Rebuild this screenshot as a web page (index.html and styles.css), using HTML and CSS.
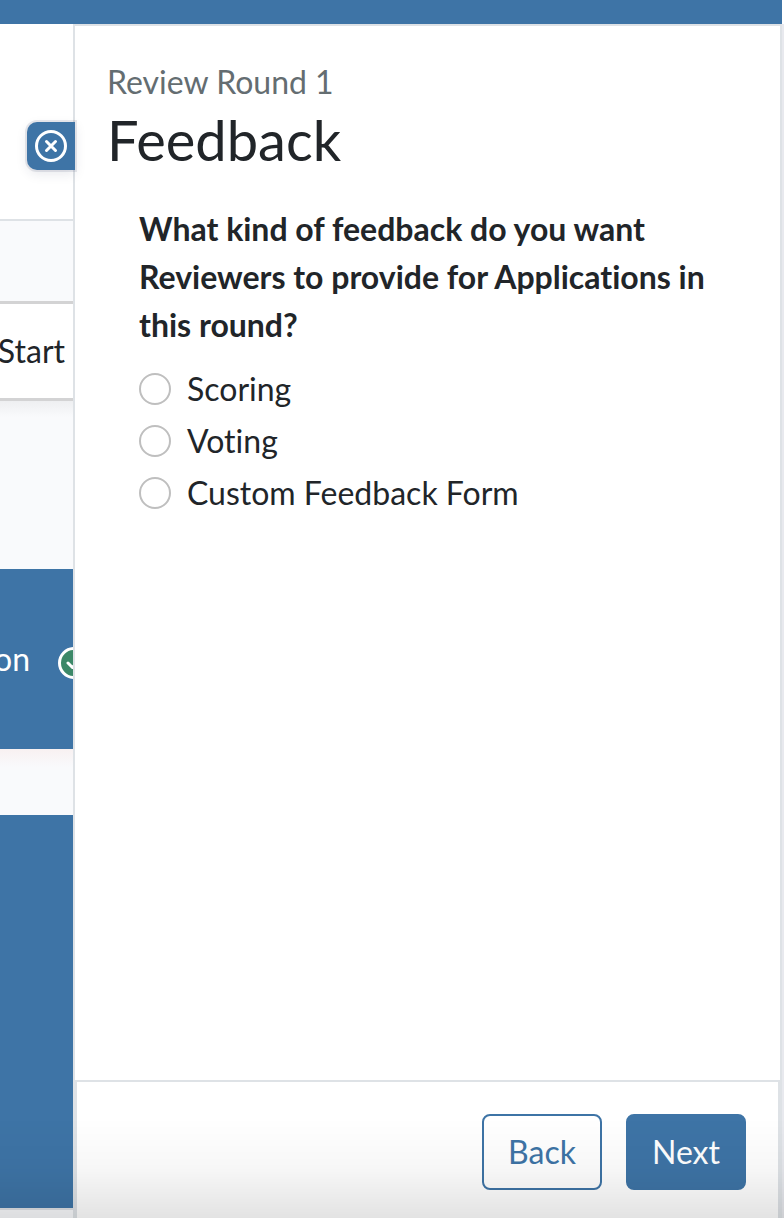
FILE: index.html
```html
<!DOCTYPE html>
<html lang="en">
<head>
    <meta charset="utf-8">
    <title>Review Round 1 - Feedback</title>
    <meta name="viewport" content="width=device-width, initial-scale=1.0">
    <link rel="stylesheet" href="styles.css">
</head>
<body>
    <header class="topbar"></header>

    <div class="workspace">
        <main class="page">
            <div class="page-header"></div>
            <div class="page-gap"></div>
            <div class="start-row">Start</div>
            <div class="round-gap"></div>
            <div class="round-card">
                <div class="round-title">on<svg class="check-icon" viewBox="0 0 32 32" aria-hidden="true">
                    <circle cx="16" cy="16" r="14.5" fill="#3c8868" stroke="#fff" stroke-width="3"/>
                    <path d="M10 16l4.5 4.5 8-9" fill="none" stroke="#fff" stroke-width="3" stroke-linecap="round" stroke-linejoin="round"/>
                </svg></div>
            </div>
            <div class="card-gap"></div>
            <div class="detail-card"></div>
            <div class="page-end"></div>
        </main>

        <aside class="panel">
            <button class="close-button" type="button" aria-label="Close">
                <svg viewBox="0 0 32 32" aria-hidden="true">
                    <circle cx="16" cy="16" r="14.5" fill="none" stroke="#fff" stroke-width="3"/>
                    <path d="M11.5 11.5l9 9M20.500 11.5l-9 9" fill="none" stroke="#fff" stroke-width="3" stroke-linecap="round"/>
                </svg>
            </button>

            <div class="panel-body">
                <p class="subtitle">Review Round 1</p>
                <h1>Feedback</h1>
                <fieldset>
                    <legend>What kind of feedback do you want Reviewers to provide for Applications in this round?</legend>
                    <label class="option"><input type="radio" name="feedback" value="scoring">Scoring</label>
                    <label class="option"><input type="radio" name="feedback" value="voting">Voting</label>
                    <label class="option"><input type="radio" name="feedback" value="custom">Custom Feedback Form</label>
                </fieldset>
            </div>

            <footer class="panel-footer">
                <button class="button back-button" type="button">Back</button>
                <button class="button next-button" type="button">Next</button>
            </footer>
        </aside>
    </div>
</body>
</html>
```
FILE: styles.css
```css
* {
    box-sizing: border-box;
}

body {
    margin: 0;
    min-height: 100vh;
    display: flex;
    flex-direction: column;
    font-family: Lato, sans-serif;
    font-size: 32px;
    font-variant-ligatures: none;
    line-height: 48px;
    color: #212529;
    background: #fff;
}

/* Shade along the bottom edge of the window */
body::after {
    content: "";
    position: fixed;
    left: 0;
    right: 0;
    bottom: 0;
    height: 100px;
    background: linear-gradient(rgba(0, 0, 0, 0), rgba(0, 0, 0, 0.03) 50%, rgba(0, 0, 0, 0.11));
    pointer-events: none;
}

.topbar {
    height: 24px;
    margin-right: 2px;
    background: #3e74a6;
}

.workspace {
    flex: 1;
    display: flex;
    padding-right: 2px;
    background: #e8e9ee;
}

.page {
    width: 73px;
    display: flex;
    flex-direction: column;
    overflow: hidden;
    background: #f9fafc;
}

.page-header {
    height: 197px;
    background: #fff;
    border-bottom: 2px solid #dee2e6;
}

.page-gap {
    height: 80px;
}

.start-row {
    height: 100px;
    display: flex;
    align-items: center;
    justify-content: flex-end;
    padding-right: 8px;
    background: #fff;
    border-top: 3px solid #d3d3d4;
    border-bottom: 3px solid #d3d3d4;
}

.round-gap {
    height: 168px;
    background: linear-gradient(#eeeff1, #f9fafc 16px);
}

.round-card {
    height: 180px;
    display: flex;
    align-items: center;
    justify-content: flex-end;
    margin-right: -17px;
    color: #fff;
    background: #3e74a6;
}

.round-title {
    white-space: nowrap;
}

.check-icon {
    width: 32px;
    height: 32px;
    margin-left: 28px;
    vertical-align: middle;
}

.card-gap {
    height: 66px;
    background: linear-gradient(#f8f1f1, #f9fafc 18px);
}

.detail-card {
    flex: 1;
    background: #3e74a6;
}

.page-end {
    height: 10px;
    border-top: 2px solid #dee2e6;
}

.panel {
    position: relative;
    flex: 1;
    display: flex;
    flex-direction: column;
    background: #fff;
    border: 2px solid #dee2e6;
    border-bottom: 0;
}

.close-button {
    position: absolute;
    top: 96px;
    right: 100%;
    width: 48px;
    height: 48px;
    padding: 8px;
    border: 0;
    border-radius: 10px 0 0 10px;
    background: #3e74a6;
    box-shadow: 0 0 0 2px rgba(33, 37, 80, 0.1), 0 4px 12px rgba(33, 37, 80, 0.1);
}

.close-button svg {
    display: block;
    width: 32px;
    height: 32px;
}

.panel-body {
    flex: 1;
    padding: 32px;
}

.subtitle {
    margin: 0;
    color: #646d71;
}

h1 {
    margin: 0;
    font-size: 56px;
    font-weight: 400;
    line-height: 67px;
}

fieldset {
    margin: 32px 0 0;
    padding: 0 32px;
    border: 0;
}

legend {
    padding: 0;
    margin-bottom: 16px;
    font-weight: 700;
}

.option {
    display: flex;
    align-items: center;
    gap: 16px;
    margin-bottom: 4px;
}

.option input {
    appearance: none;
    width: 32px;
    height: 32px;
    margin: 0;
    border: 2px solid #bfbfbf;
    border-radius: 50%;
    background: #fff;
}

.option input:checked {
    border: 10px solid #3e74a6;
}

.panel-footer {
    display: flex;
    justify-content: flex-end;
    gap: 24px;
    padding: 32px 32px 28px;
    border: 2px solid #dee2e6;
    border-bottom: 0;
}

.button {
    padding: 12px 24px;
    border: 2px solid #3e74a6;
    border-radius: 8px;
    font: inherit;
    cursor: pointer;
}

.back-button {
    color: #3e74a6;
    background: #fff;
}

.next-button {
    color: #fff;
    background: #3e74a6;
}
```
